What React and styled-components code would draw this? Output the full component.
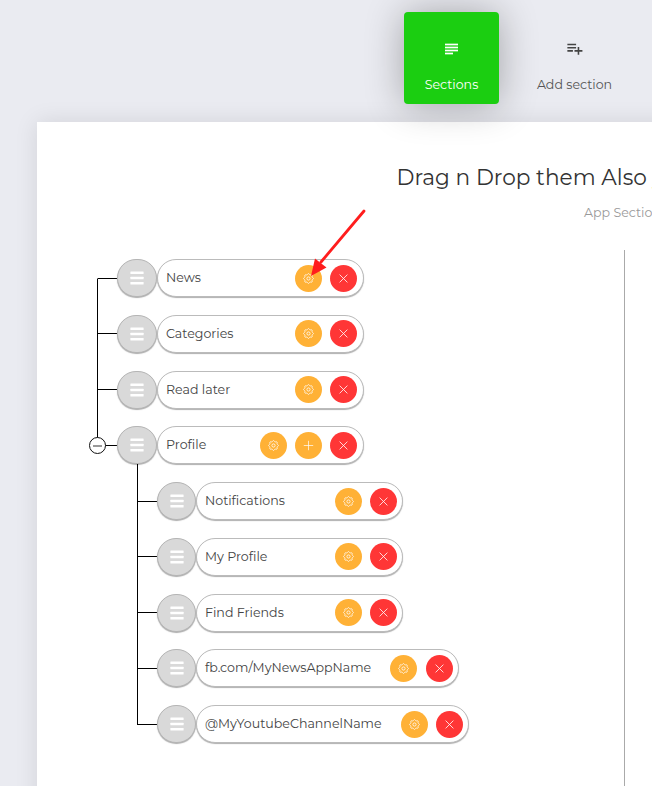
import React from "react";
import styled, { createGlobalStyle } from "styled-components";
import { MdPlaylistAdd } from "react-icons/md";

const Global = createGlobalStyle`
  * { box-sizing: border-box; }
  html, body { margin: 0; overflow: hidden; }
  body { font-family: Montserrat, Inter, "Open Sans", sans-serif; background: #eaebf1; }
`;

const Page = styled.div`
  width: 652px;
  height: 786px;
  overflow: hidden;
  background: #eaebf1;
`;

const Tabs = styled.nav`
  position: relative;
  z-index: 1;
  display: flex;
  height: 122px;
  padding: 12px 0 0 404px;
`;

const Tab = styled.div`
  display: flex;
  flex-direction: column;
  align-items: center;
  flex: none;
  width: ${(p) => p.$width}px;
  height: 92px;
  margin-right: 10px;
  padding-top: 27px;
  border-radius: 4px;
  font-size: 12.6px;
  line-height: 18px;
  white-space: nowrap;
  color: ${(p) => (p.$active ? "#fff" : "#555")};
  background: ${(p) => (p.$active ? "#1bce11" : "transparent")};
  box-shadow: ${(p) => (p.$active ? "0 1px 38px rgba(0,0,0,.31)" : "none")};
  svg { margin-bottom: 18px; color: ${(p) => (p.$active ? "#fff" : "#444")}; }
`;

const Panel = styled.main`
  display: flex;
  flex-direction: column;
  width: 900px;
  height: 700px;
  margin-left: 37px;
  padding-top: 41px;
  background: #fff;
  box-shadow: 0 0 22px rgba(0, 0, 0, 0.1);
`;

const Title = styled.h1`
  margin: 0 0 0 359.6px;
  font-size: 21.66px;
  line-height: 28px;
  font-weight: 400;
  color: #333;
  white-space: nowrap;
`;

const Subtitle = styled.div`
  margin: 13px 0 0 547px;
  font-size: 12.6px;
  line-height: 18px;
  color: #999;
`;

const Columns = styled.div`
  display: flex;
  flex: 1;
  margin-top: 28px;
`;

const Tree = styled.div`
  width: 588px;
  padding: 0.21px 0 0 60px;
  border-right: 1px solid #aaa;
`;

const Row = styled.div`
  display: flex;
  align-items: center;
  height: 55.78px;
  padding-left: ${(p) => (p.$child ? 40 : 0)}px;
`;

const Connector = styled.div`
  position: relative;
  display: flex;
  flex-direction: column;
  flex: none;
  width: 20px;
  height: 100%;
`;

const Upper = styled.div`
  flex: 1;
  border-left: 1px solid ${(p) => (p.$line ? "#000" : "transparent")};
  border-bottom: 1px solid #000;
`;

const Lower = styled.div`
  flex: 1;
  border-left: 1px solid ${(p) => (p.$line ? "#000" : "transparent")};
`;

const Toggle = styled.span`
  position: absolute;
  left: -8px;
  top: 19.5px;
  display: grid;
  place-items: center;
  width: 17px;
  height: 17px;
  border: 1.5px solid #111;
  border-radius: 50%;
  background: #fff;
  &::before { content: ""; width: 9px; height: 2px; background: #999; }
`;

const Handle = styled.div`
  position: relative;
  display: grid;
  place-items: center;
  flex: none;
  width: ${(p) => (p.$child ? 39 : 40)}px;
  height: 38px;
  border: 1px solid #b5b5b5;
  border-radius: 19px;
  background: #d9d9d9;
  box-shadow: 0 1px 1px #b0b0b0;
  &::after {
    content: "";
    display: ${(p) => (p.$open ? "block" : "none")};
    position: absolute;
    left: 19px;
    top: 37px;
    width: 1px;
    height: 11px;
    background: #000;
  }
`;

const Pill = styled.div`
  display: flex;
  align-items: center;
  flex: none;
  gap: ${(p) => p.$gap || 8}px;
  width: ${(p) => p.$width}px;
  height: 38px;
  padding: 0 ${(p) => (p.$child ? 5 : 6)}px 0 8px;
  border: 1px solid #bbb;
  border-radius: 19px;
  background: #fff;
  box-shadow: 0 1px 1px #b0b0b0;
`;

const Label = styled.span`
  flex: 1;
  font-size: 12.62px;
  line-height: 18px;
  color: #444;
  white-space: nowrap;
`;

const Action = styled.span`
  display: grid;
  place-items: center;
  flex: none;
  width: 27px;
  height: 27px;
  border-radius: 50%;
  background: ${(p) => (p.$danger ? "#ff3636" : "#ffb136")};
`;

const Arrow = styled.svg`
  position: absolute;
  z-index: 2;
  left: 300px;
  top: 200px;
`;

const gearPath =
  Array.from({ length: 96 }, (_, i) => {
    const a = (i / 96) * Math.PI * 2;
    const r = 4.4 + 0.55 * Math.cos(8 * a);
    return `${i ? "L" : "M"}${(5.5 + r * Math.cos(a)).toFixed(2)} ${(5.5 + r * Math.sin(a)).toFixed(2)}`;
  }).join("") + "Z";

const glyphs = {
  gear: (
    <>
      <path d={gearPath} />
      <circle cx="5.5" cy="5.5" r="1.6" />
    </>
  ),
  plus: <path d="M5.5 .8V10.2M.8 5.5H10.2" strokeWidth=".7" />,
  close: <path d="M1.6 1.6L9.4 9.4M9.4 1.6L1.6 9.4" />,
};

const Glyph = ({ name }) => (
  <svg width="11" height="11" viewBox="0 0 11 11" fill="none" stroke="#fff" strokeWidth=".8">
    {glyphs[name]}
  </svg>
);

const GripIcon = () => (
  <svg width="14" height="14" viewBox="0 0 14 14" fill="#fff">
    <rect x=".4" y=".6" width="13.2" height="2.4" rx=".5" />
    <rect x=".4" y="5.8" width="13.2" height="2.4" rx=".5" />
    <rect x=".4" y="11" width="13.2" height="2.4" rx=".5" />
  </svg>
);

const SectionsIcon = () => (
  <svg width="19" height="19" viewBox="0 0 19 19" fill="currentColor">
    <path opacity=".35" d="M3 4H16V13H11V16H3Z" />
    <path d="M3 5H16V6H3ZM3 8H16V9H3ZM3 11H16V12H3ZM3 14H11V15H3Z" />
  </svg>
);

const sections = [
  { label: "News", width: 207 },
  { label: "Categories", width: 207 },
  { label: "Read later", width: 207 },
  { label: "Profile", width: 207, open: true },
  { label: "Notifications", width: 207, child: true },
  { label: "My Profile", width: 207, child: true },
  { label: "Find Friends", width: 207, child: true },
  { label: "fb.com/MyNewsAppName", width: 263, gap: 9, child: true },
  { label: "@MyYoutubeChannelName", width: 273, child: true },
];

export default function App() {
  return (
    <Page>
      <Global />
      <Tabs>
        <Tab $active $width={95}>
          <SectionsIcon />
          Sections
        </Tab>
        <Tab $width={131}>
          <MdPlaylistAdd size={19} />
          Add section
        </Tab>
      </Tabs>
      <Panel>
        <Title>Drag n Drop them Also you</Title>
        <Subtitle>App Sections</Subtitle>
        <Columns>
          <Tree>
            {sections.map(({ label, width, gap, child, open }, i) => (
              <Row key={label} $child={child}>
                <Connector>
                  <Upper $line={i > 0} />
                  <Lower $line={!open && i < sections.length - 1} />
                  {open && <Toggle />}
                </Connector>
                <Handle $child={child} $open={open}>
                  <GripIcon />
                </Handle>
                <Pill $width={width} $child={child} $gap={gap}>
                  <Label>{label}</Label>
                  <Action><Glyph name="gear" /></Action>
                  {open && <Action><Glyph name="plus" /></Action>}
                  <Action $danger><Glyph name="close" /></Action>
                </Pill>
              </Row>
            ))}
          </Tree>
        </Columns>
      </Panel>
      <Arrow width="70" height="80" viewBox="0 0 70 80" fill="#ff1d1d">
        <path d="M64 11L21 62" stroke="#ff1d1d" strokeWidth="2.8" strokeLinecap="round" />
        <path d="M11 76L15 58.5L20 62.5L26.5 67.5Z" />
      </Arrow>
    </Page>
  );
}
